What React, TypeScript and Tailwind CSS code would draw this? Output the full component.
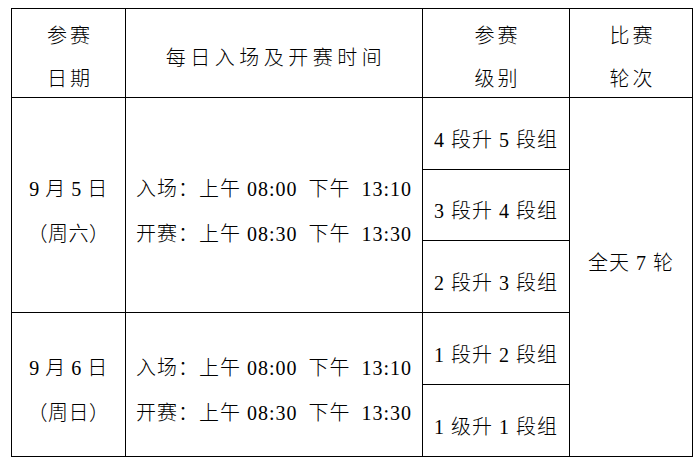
const levels = [
  "4 段升 5 段组",
  "3 段升 4 段组",
  "2 段升 3 段组",
  "1 段升 2 段组",
  "1 级升 1 段组",
];

const cell = "border border-black align-middle p-0";

const TimeLines = () => (
  <div className="pl-[10px] pt-[13px] leading-[45px] tracking-[1px] whitespace-pre">
    <div>入场：上午 08:00{"\u2002"}下午{"\u2002"}13:10</div>
    <div>开赛：上午 08:30{"\u2002"}下午{"\u2002"}13:30</div>
  </div>
);

const HeadPair = ({ top, bottom }: { top: string; bottom: string }) => (
  <div className="pt-[5px] -mb-[5px] leading-[43px] tracking-[3px] pl-[3px]">
    <div>{top}</div>
    <div>{bottom}</div>
  </div>
);

export default function App() {
  return (
    <div className="w-[700px] h-[460px] bg-white pt-[8px] pl-[11px] text-black text-[20px] font-['Liberation_Serif','Noto_Sans_CJK_SC',serif] font-light">
      <table className="table-fixed border-collapse w-[681px]">
        <colgroup>
          <col className="w-[114px]" />
          <col className="w-[297px]" />
          <col className="w-[147px]" />
          <col className="w-[123px]" />
        </colgroup>
        <tbody>
          <tr className="h-[89px]">
            <td className={`${cell} text-center`}>
              <HeadPair top="参赛" bottom="日期" />
            </td>
            <td className={`${cell} text-center`}>
              <div className="pt-[10px] tracking-[4.5px] pl-[4px]">每日入场及开赛时间</div>
            </td>
            <td className={`${cell} text-center`}>
              <HeadPair top="参赛" bottom="级别" />
            </td>
            <td className={`${cell} text-center`}>
              <HeadPair top="比赛" bottom="轮次" />
            </td>
          </tr>
          {levels.map((lv, i) => (
            <tr key={lv} className={i === 1 ? "h-[71px]" : "h-[72px]"}>
              {i === 0 && (
                <>
                  <td rowSpan={3} className={`${cell} text-center`}>
                    <div className="pt-[13px] leading-[45px] tracking-[0.5px]">
                      <div>9 月 5 日</div>
                      <div>（周六）</div>
                    </div>
                  </td>
                  <td rowSpan={3} className={cell}>
                    <TimeLines />
                  </td>
                </>
              )}
              {i === 3 && (
                <>
                  <td rowSpan={2} className={`${cell} text-center`}>
                    <div className="pt-[13px] leading-[45px] tracking-[0.5px]">
                      <div>9 月 6 日</div>
                      <div>（周日）</div>
                    </div>
                  </td>
                  <td rowSpan={2} className={cell}>
                    <TimeLines />
                  </td>
                </>
              )}
              <td className={`${cell} text-center`}>
                <div className="pt-[12px] tracking-[1px]">{lv}</div>
              </td>
              {i === 0 && (
                <td rowSpan={5} className={`${cell} text-center`}>
                  <div className="pb-[29px] tracking-[1px]">全天 7 轮</div>
                </td>
              )}
            </tr>
          ))}
        </tbody>
      </table>
    </div>
  );
}
